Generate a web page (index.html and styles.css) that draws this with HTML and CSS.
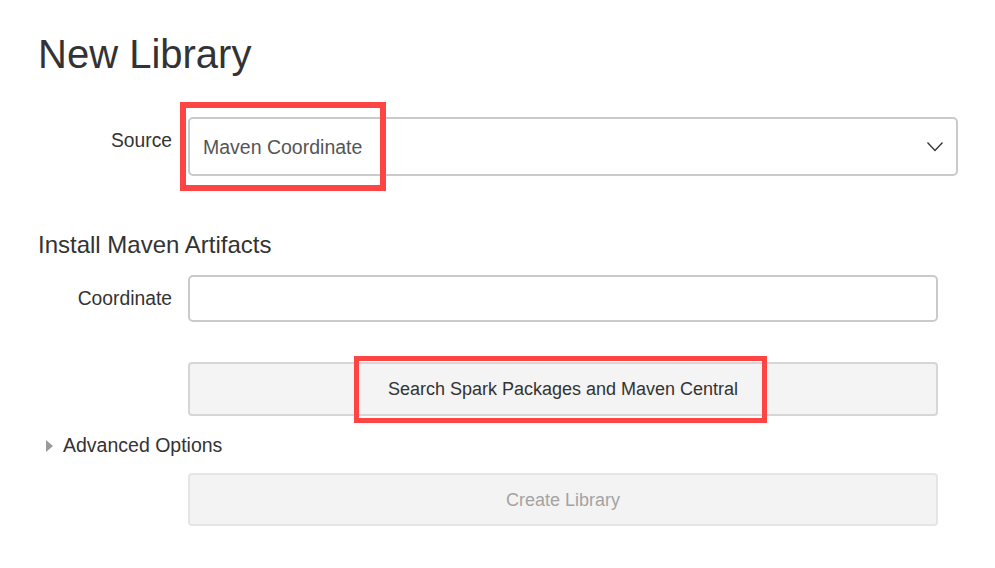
FILE: index.html
```html
<!DOCTYPE html>
<html>
<head>
<meta charset="utf-8">
<link rel="stylesheet" href="styles.css">
</head>
<body>
<div class="page">
  <h1 class="title">New Library</h1>

  <div class="row row-source">
    <label class="label label-top">Source</label>
    <div class="select">
      <span class="select-value">Maven Coordinate</span>
      <svg class="chevron" width="18" height="12" viewBox="0 0 18 12"><polyline points="1.5,1.5 9,9.5 16.5,1.5" fill="none" stroke="#333" stroke-width="1.3"/></svg>
    </div>
  </div>

  <div class="maven">
    <h2 class="section">Install Maven Artifacts</h2>
    <div class="row row-coord">
      <label class="label">Coordinate</label>
      <div class="input"></div>
    </div>
    <div class="row row-search">
      <div class="label"></div>
      <div class="btn btn-search">Search Spark Packages and Maven Central</div>
    </div>
  </div>

  <div class="advanced">
    <span class="caret"></span>
    <span class="adv-text">Advanced Options</span>
  </div>

  <div class="row row-create maven-w">
    <div class="label"></div>
    <div class="btn btn-create">Create Library</div>
  </div>

  <div class="mark mark-1"></div>
  <div class="mark mark-2"></div>
</div>
</body>
</html>
```

FILE: styles.css
```css
html, body {
  margin: 0;
  padding: 0;
  background: #ffffff;
}

.page {
  position: relative;
  width: 995px;
  height: 568px;
  box-sizing: border-box;
  padding: 34px 37px 0 38px;
  font-family: "Liberation Sans", Arial, sans-serif;
  color: #333333;
}

.title {
  margin: 0;
  font-size: 40px;
  line-height: 40px;
  font-weight: normal;
  color: #333333;
}

.row {
  display: flex;
  align-items: center;
}

.label {
  flex: 0 0 134px;
  margin-right: 16px;
  text-align: right;
  font-size: 19.3px;
  line-height: 24px;
  color: #333333;
}

.label-top {
  align-self: flex-start;
  padding-top: 12px;
}

.row-source {
  margin-top: 43px;
}

.select {
  flex: 1;
  height: 59px;
  box-sizing: border-box;
  border: 2px solid #cacaca;
  border-radius: 5px;
  display: flex;
  align-items: center;
  justify-content: space-between;
  padding: 0 12px 0 13px;
}

.select-value {
  font-size: 19.5px;
  line-height: 24px;
  color: #555555;
}

.chevron {
  display: block;
  margin-top: 1px;
}

.maven {
  margin-right: 20px;
}

.section {
  margin: 55px 0 0 0;
  font-size: 24px;
  line-height: 28px;
  font-weight: normal;
  color: #333333;
}

.row-coord {
  margin-top: 16px;
}

.input {
  flex: 1;
  height: 47px;
  box-sizing: border-box;
  border: 2px solid #cacaca;
  border-radius: 5px;
}

.row-search {
  margin-top: 40px;
}

.btn {
  flex: 1;
  box-sizing: border-box;
  border-radius: 4px;
  display: flex;
  align-items: center;
  justify-content: center;
  font-size: 18px;
  line-height: 22px;
}

.btn-search {
  height: 54px;
  background: #f4f4f4;
  border: 2px solid #d6d6d6;
  color: #333333;
}

.advanced {
  margin-top: 17px;
  display: flex;
  align-items: center;
  height: 24px;
  padding-left: 8px;
}

.caret {
  width: 0;
  height: 0;
  border-top: 6px solid transparent;
  border-bottom: 6px solid transparent;
  border-left: 7px solid #9a9a9a;
  margin-right: 10px;
  margin-top: 1px;
}

.adv-text {
  font-size: 19.5px;
  line-height: 24px;
  color: #333333;
}

.maven-w {
  margin-right: 20px;
}

.row-create {
  margin-top: 16px;
}

.btn-create {
  height: 53px;
  background: #f3f3f3;
  border: 2px solid #e5e5e5;
  color: #a3a3a3;
}

.mark {
  position: absolute;
  box-sizing: border-box;
  border-style: solid;
  border-color: #ff4444;
}

.mark-1 {
  left: 180px;
  top: 102px;
  width: 206px;
  height: 89px;
  border-width: 6px;
}

.mark-2 {
  left: 354px;
  top: 356px;
  width: 413px;
  height: 67px;
  border-width: 5px;
}
```
